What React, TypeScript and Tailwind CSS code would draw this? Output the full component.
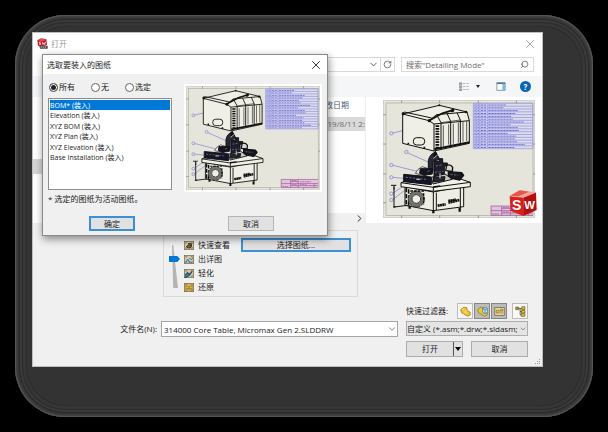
import { ReactNode, useState } from "react";
import { ChevronDown, ChevronRight, RotateCw, Search, X } from "lucide-react";

const sheets = ["BOM*", "Elevation", "XYZ BOM", "XYZ Plan", "XYZ Elevation", "Base Installation"];
const scopes = ["所有", "无", "选定"];
const modes = ["快速查看", "出详图", "轻化", "还原"];
const bomRows = [52, 46, 88, 82, 68, 74, 106, 66, 88, 92, 58, 84, 80, 86, 110, 78];

function SheetDrawing() {
  return (
    <svg viewBox="54 30 456 354" className="block w-full" aria-hidden="true">
      <rect x="54" y="30" width="456" height="354" fill="#e6e5db" />
      <rect x="55" y="31" width="454" height="352" fill="none" stroke="#c9c9c1" strokeWidth="2" />
      <rect x="63" y="39" width="441" height="337" fill="none" stroke="#a9a9a0" strokeWidth="2" />
      <path d="M110 31v8M224 31v8M340 31v8M454 31v8M110 376v8M224 376v8M340 376v8M454 376v8M55 74h8M55 162h8M55 252h8M55 338h8M504 74h6M504 162h6M504 252h6" stroke="#777" strokeWidth="2" />

      {/* bill of materials */}
      <rect x="325" y="40" width="178" height="136" fill="#dedeea" />
      {bomRows.map((w, i) => (
        <g key={i}>
          <path d={`M325 ${40 + i * 8.5}H503`} stroke="#8686e6" strokeWidth="2" />
          <path d={`M328 ${45 + i * 8.5}h4m5 0h5m5 0h18m5 0h${w}`} stroke="#6c6cd6" strokeWidth="3" strokeDasharray="7 2" />
        </g>
      ))}
      <path d="M325 176H503M325 40V176M334 40V176M344 40V176M367 40V176M503 40V176" stroke="#8d8de4" strokeWidth="2" fill="none" />

      {/* balloons and leaders */}
      <g stroke="#7474cc" strokeWidth="2" fill="none">
        <circle cx="79" cy="130" r="5" />
        <circle cx="124" cy="186" r="5" />
        <circle cx="79" cy="225" r="5" />
        <circle cx="79" cy="262" r="5" />
        <circle cx="79" cy="311" r="5" />
        <circle cx="79" cy="330" r="5" />
        <path d="M84 129 113 122M129 189 194 218M84 226 160 245M84 262 122 266M84 309 120 285M84 328 118 302" />
      </g>

      {/* enclosure */}
      <g stroke="#111" strokeWidth="3" strokeLinejoin="round">
        <path d="M113 72 223 46 306 66 313 92V160L207 183 113 160Z" fill="#f0efe5" />
        <path d="M113 72 192 92M192 92 215 74 306 66M192 92 207 102V183M118 66 200 84M215 74 228 98 228 177M246 70 257 94V170M276 68 286 90V165M207 102 313 92" fill="none" />
        <path d="M192 92 232 70 268 59" fill="none" strokeWidth="5" />
        <path d="M228 98 257 94M257 94 286 90M235 106V168M251 103V164M265 101V161M280 98V158M294 96V155M305 94V153" fill="none" strokeWidth="2" />
        <path d="M217 106V174" strokeWidth="11" strokeDasharray="5 3" />
        <path d="M208 178 313 157" strokeWidth="6" />
        <rect x="145" y="143" width="34" height="22" rx="10" fill="none" />
        <path d="M130 158v5M178 170v6" strokeWidth="5" />
      </g>
      <g fill="#111">
        <circle cx="115" cy="71" r="5" />
        <circle cx="223" cy="46" r="3" />
        <circle cx="193" cy="92" r="5" />
        <circle cx="303" cy="66" r="4" />
        <circle cx="262" cy="62" r="5" />
      </g>

      {/* base cabinet */}
      <g stroke="#111" strokeWidth="3" strokeLinejoin="round">
        <path d="M120 290 205 306 296 288V350L205 362 120 346Z" fill="#eeeee4" />
        <path d="M205 306V362M214 308V360M286 290V354" fill="none" />
        <path d="M108 278 143 266 278 264 316 277V290L205 304 108 290Z" fill="#f2f1e8" />
        <path d="M108 278 205 292 316 277M205 292v12" fill="none" />
        <path d="M124 294V345M131 298V348" strokeWidth="5" strokeDasharray="13 5" />
        <path d="M134 347v9M205 360v10M284 354v11" strokeWidth="7" />
        <circle cx="154" cy="327" r="19" fill="none" stroke="#73736e" strokeWidth="11" />
        <circle cx="154" cy="327" r="24" fill="none" stroke="#2c2c2c" strokeWidth="3" strokeDasharray="9 4" />
        <circle cx="154" cy="327" r="13" fill="none" stroke="#333" strokeWidth="3" />
        <path d="M218 347 242 343M250 338 284 330M250 333 273 329" strokeWidth="8" strokeDasharray="6 1" />
        <path d="M136 303h45M176 310v34" strokeWidth="4" strokeDasharray="8 3" />
      </g>

      {/* stage assembly */}
      <g stroke="#111" strokeLinejoin="round">
        <path d="M151 250Q157 236 172 230L190 236 182 258Z" fill="#e8e7dd" strokeWidth="2" />
        <path d="M212 186Q194 192 190 212V244H204V214L224 208Z" fill="#28283a" strokeWidth="3" />
        <path d="M211 184 206 199H218Z" fill="#111" strokeWidth="3" />
        <path d="M205 205 218 195M208 225 232 212" stroke="#bdbdb3" strokeWidth="3" />
        <path d="M207 214H223V206H233V219H247V228H238V270L207 273Z" fill="#1d1d2d" strokeWidth="3" />
        <path d="M116 253 199 261 199 284 116 275Z" fill="#151529" strokeWidth="3" />
        <path d="M166 236H202V252L178 256 164 250Z" fill="#161622" strokeWidth="3" />
        <path d="M245 226Q257 221 263 232L262 244 242 242Z" fill="#d8d7cf" strokeWidth="4" />
        <path d="M250 245 290 248 296 256 284 270 250 263Z" fill="#171721" strokeWidth="4" />
        <path d="M199 262 240 252 262 268 204 282Z" fill="#c9c8c0" strokeWidth="3" />
        <path d="M205 262 240 260 238 272 206 276Z" fill="#25252f" strokeWidth="3" />
        <path d="M122 262 184 268M212 228 230 225M210 247 236 244M256 253 280 256M187 244 196 242" stroke="#8b8b91" strokeWidth="2" strokeDasharray="7 4" />
        <path d="M154 268h12M225 250v15" stroke="#d9d9dd" strokeWidth="3" />
        <path d="M204 291 226 288" strokeWidth="4" />
      </g>
      <path d="M78 286H94M87 286V351L128 346M84 351H92M87 291v8" stroke="#111" strokeWidth="3" fill="none" />

      {/* title block */}
      <rect x="378" y="348" width="126" height="28" fill="#ddc6d8" />
      <path d="M378 348H504M378 376H504M378 348V376M410 348V376M436 348V376M378 362H504M410 369H504M410 355H436M490 362V376" stroke="#a0469a" strokeWidth="2" />
      <path d="M414 352h18M414 366h18M442 356h36M442 366h22M382 372h20" stroke="#b0609c" strokeWidth="3" strokeDasharray="6 2" />
    </svg>
  );
}

function CubeLogo() {
  return (
    <svg viewBox="0 0 84 80" className="absolute right-[5px] bottom-[6px] w-7" aria-hidden="true">
      <path d="M2 18 32 1 81 7 43 22Z" fill="#f3a29a" />
      <path d="M2 18 32 1 60 5 25 20Z" fill="#e8564b" />
      <path d="M2 18 43 22 43 78 5 62Z" fill="#d81f1a" />
      <path d="M43 22 81 7 83 60 43 78Z" fill="#b40f10" />
      <path d="M2 18 43 22 81 7" fill="none" stroke="#f6c0b8" strokeWidth="2" />
      <text x="9" y="60" fill="#fff" fontSize="42" fontWeight="700" fontFamily="Liberation Sans, sans-serif">S</text>
      <text x="46" y="56" fill="#fff" fontSize="34" fontWeight="700" fontFamily="Liberation Sans, sans-serif">W</text>
    </svg>
  );
}

function AppIcon() {
  return (
    <svg viewBox="0 0 33 33" className="size-[11px]" aria-hidden="true">
      <path d="M1 7 12 1 28 4 30 20 16 27 3 23Z" fill="#c4121f" />
      <path d="M3 7 12 2 27 5 17 10Z" fill="#e45a5c" />
      <path d="M12 12H7v4h4v4H6M16 12l2 8 3-6 2 6 3-9" stroke="#fff" strokeWidth="2" fill="none" />
      <path d="M7 23H32V32H9Z" fill="#4c4549" />
      <path d="M11 27h18" stroke="#ccc" strokeWidth="3" strokeDasharray="4 2" />
    </svg>
  );
}

function ModeIcon({ index }: { index: number }) {
  return (
    <svg viewBox="0 0 30 27" className="h-[9px] w-[10px]" aria-hidden="true">
      <rect x="1" y="1" width="28" height="25" fill={index === 3 ? "#d9b65c" : "#d8cba2"} stroke="#6d6348" strokeWidth="2" />
      <path d="M5 8V5h5M20 5h5v4M5 19v3h5M20 22h5v-4" fill="none" stroke="#75684a" strokeWidth="2" />
      {index === 0 && <path d="M7 17q8-11 16 0-8 9-16 0M12 8h10v7" fill="#8b7136" stroke="#2d2a22" strokeWidth="3" />}
      {index === 1 && <path d="M5 24 11 12 17 24M16 9l6 6 4-5M16 19l8 5" fill="#9dc0dc" stroke="#497899" strokeWidth="3" />}
      {index === 2 && <path d="M1 25Q14 25 24 7M3 19l8-8 5 7" fill="#3f719b" stroke="#24557c" strokeWidth="4" />}
      {index === 3 && <path d="M6 10h7v7H6zM17 10h7v7h-7zM10 18h10" fill="#f5d455" stroke="#8c6b1c" strokeWidth="2" />}
    </svg>
  );
}

function FilterIcon({ index }: { index: number }) {
  return (
    <svg viewBox="0 0 30 30" className="size-[11px]" aria-hidden="true">
      {index < 2 && <path d="M2 10 11 3 19 5V12L28 17V24L21 28 4 18Z" fill="#f0c52e" stroke="#94731b" strokeWidth="2" />}
      {index === 0 && <path d="M6 10 12 6M12 17l7 4M19 12l-6 3" stroke="#fff0a0" strokeWidth="2" />}
      {index === 1 && <path d="M15 7 22 3 29 7V17L22 21 15 17ZM15 7l7 4 7-4M22 11v10" fill="#c3e1ee" stroke="#397fa3" strokeWidth="2" />}
      {index === 2 && (
        <>
          <rect x="2" y="4" width="26" height="22" fill="#ddd4ad" stroke="#726642" strokeWidth="2" />
          <path d="M6 12h8v7H6zM18 9h6v5h-6zM17 19h8" fill="#f0c832" stroke="#92701a" strokeWidth="2" />
        </>
      )}
      {index === 3 && (
        <>
          <path d="M6 7h18M14 7v17h8M14 15h9" stroke="#333" strokeWidth="2" fill="none" />
          <path d="M2 3h8v7H2zM19 2h8v8h-8zM18 12h9v7h-9zM17 21h10v7H17z" fill="#efca31" stroke="#67571e" strokeWidth="2" />
          <path d="M3 4h6l-3 5z" fill="#468346" />
        </>
      )}
    </svg>
  );
}

function PushButton({ children, className }: { children: ReactNode; className: string }) {
  return (
    <button type="button" className={`flex items-center justify-center bg-[#e1e1e1] leading-none ${className}`}>
      {children}
    </button>
  );
}

function SheetDialog() {
  const [scope, setScope] = useState("所有");
  const [sheet, setSheet] = useState(["BOM*"]);

  return (
    <section role="dialog" aria-labelledby="sheet-title" className="absolute top-[21px] left-[9px] w-[286px] border border-[#8a8a8a] bg-[#f0f0f0] shadow-[1px_3px_8px_rgba(0,0,0,0.45)]">
      <header className="flex h-[19px] items-center justify-between bg-white px-1">
        <h2 id="sheet-title">选取要装入的图纸</h2>
        <button type="button" aria-label="关闭">
          <X className="size-[14px]" strokeWidth={1.5} />
        </button>
      </header>
      <div className="flex gap-3 px-[5px] pt-[7px]">
        <div className="w-[124px] shrink-0">
          <div className="flex h-3 items-center gap-4 pl-px">
            {scopes.map((name) => (
              <label key={name} className="flex items-center gap-px">
                <input
                  type="radio"
                  name="scope"
                  checked={scope === name}
                  onChange={() => setScope(name)}
                  className="size-[9px] appearance-none rounded-full border border-[#666] bg-white checked:bg-[#222] checked:shadow-[inset_0_0_0_1px_white]"
                />
                {name}
              </label>
            ))}
          </div>
          <select
            multiple
            aria-label="图纸"
            value={sheet}
            onChange={(e) => setSheet([e.target.value])}
            className="mt-[5px] block h-[92px] w-full appearance-none overflow-hidden border border-[#8a8d92] bg-white p-px text-[7px]"
          >
            {sheets.map((name) => (
              <option
                key={name}
                value={name}
                className="h-[10px] min-h-0 p-0 leading-[10px] even:h-[11px] checked:bg-[#0078d7] checked:bg-linear-to-r checked:from-[#0078d7] checked:to-[#0078d7] checked:text-white"
              >
                {name} (装入)
              </option>
            ))}
          </select>
        </div>
        <div className="mt-[3px] h-[108px] flex-1 bg-white p-[2px]">
          <SheetDrawing />
        </div>
      </div>
      <p className="pl-[5px] leading-[14px]">* 选定的图纸为活动图纸。</p>
      <footer className="flex justify-between pt-[10px] pr-[53px] pb-1 pl-[46px]">
        <PushButton className="h-[15px] w-[46px] border-2 border-[#3c8fd4]">确定</PushButton>
        <PushButton className="h-[15px] w-[46px] border border-[#b5b5b5]">取消</PushButton>
      </footer>
    </section>
  );
}

export default function App() {
  const [fileName, setFileName] = useState("314000 Core Table, Micromax Gen 2.SLDDRW");
  const [query, setQuery] = useState("");
  const [mode, setMode] = useState(1);

  return (
    <div className="min-h-screen bg-black p-[15px] font-['Open_Sans','Noto_Sans_CJK_SC',sans-serif] text-[8px] leading-none text-[#1a1a1a]">
      <div className="rounded-[50px] bg-[#333] pt-[17px] pr-[50px] pb-[50px] pl-[17px] shadow-[inset_0_0_0_1px_#535353,inset_0_0_0_2px_#414141,inset_0_0_0_4px_#373737,inset_0_0_0_5px_#292929,inset_0_0_0_7px_#3a3a3a,inset_0_0_0_8px_#2b2b2b,inset_0_0_0_11px_#363636,inset_0_0_0_12px_#2d2d2d]">
        <main className="relative border border-[#bdbdbd] bg-white">
          <header className="flex h-[21px] items-center gap-[3px] pr-[5px] pl-1 text-[#999]">
            <AppIcon />
            <h1 className="flex-1">打开</h1>
            <button type="button" aria-label="关闭窗口">
              <X className="size-[14px]" strokeWidth={1.5} />
            </button>
          </header>

          <div className="flex gap-[6px] pt-[3px] pr-2 pb-1 pl-20">
            <div className="flex h-[15px] flex-1 items-center justify-end border border-[#d9d9d9] text-[#555]">
              <button type="button" aria-label="以前的位置" className="flex h-full items-center border-r border-[#d9d9d9] pr-px">
                <ChevronDown className="size-[11px]" strokeWidth={2} />
              </button>
              <button type="button" aria-label="刷新" className="px-[2px]">
                <RotateCw className="size-[9px]" strokeWidth={2} />
              </button>
            </div>
            <label className="flex h-[15px] w-[133px] items-center border border-[#d9d9d9] px-1 text-[#555]">
              <input
                type="search"
                aria-label="搜索"
                value={query}
                onChange={(e) => setQuery(e.target.value)}
                placeholder={'搜索"Detailing Mode"'}
                className="min-w-0 flex-1 outline-none placeholder:text-[#6d6d6d]"
              />
              <Search className="size-[9px] -scale-x-100" strokeWidth={2} />
            </label>
          </div>

          <div className="flex h-[21px] items-center justify-end bg-[#f5f6f7] pr-[11px]">
            <button type="button" aria-label="更改视图" className="flex items-center gap-[7px]">
              <svg viewBox="0 0 30 26" className="h-[9px] w-[10px]" aria-hidden="true">
                <path d="M1 2h7v5H1zM1 11h7v5H1zM1 20h7v5H1z" fill="#aaa" stroke="#888" strokeWidth="2" />
                <path d="M12 4h7M22 4h7M12 13h7M22 13h7M12 22h7M22 22h7" stroke="#999" strokeWidth="2" />
              </svg>
              <span className="border-x-2 border-t-[3px] border-x-transparent border-t-[#222]" />
            </button>
            <button type="button" aria-label="预览窗格" className="ml-4">
              <svg viewBox="0 0 28 26" className="h-[9px] w-[10px]" aria-hidden="true">
                <path d="M2 2h24v22H2z" fill="#fff" stroke="#4e7691" strokeWidth="2" />
                <path d="M2 4h24" stroke="#4e7691" strokeWidth="4" />
                <path d="M18 5h8v19h-8z" fill="#80b9e2" />
              </svg>
            </button>
            <button type="button" aria-label="帮助" className="ml-[14px] size-[11px] rounded-full bg-[#0b63b5] text-center leading-[11px] font-bold text-white">
              ?
            </button>
          </div>

          <div className="flex h-[126px]">
            <nav className="w-24 pt-[62px]">
              <div className="h-[15px] bg-[#d5d5d5]" />
            </nav>
            <div className="flex min-w-0 flex-1 flex-col border-r border-[#eee]">
              <h2 className="h-[20px] pt-1 pr-4 text-right text-[#4c607a]">修改日期</h2>
              <p className="flex h-[14px] items-center justify-end bg-[#d9d9d9] text-[#6d6d6d]">2019/8/11 2:</p>
              <div className="mt-auto flex h-[10px] items-center justify-end bg-[#f0f0f0]">
                <ChevronRight className="size-[11px]" strokeWidth={2} />
              </div>
            </div>
            <div className="relative w-[176px] pt-[3px] pr-[7px] pl-[17px]">
              <SheetDrawing />
              <CubeLogo />
            </div>
          </div>

          <form className="flex gap-2 bg-[#f0f0f0] pr-[14px]" onSubmit={(e) => e.preventDefault()}>
            <div className="flex-1 pt-[7px]">
              <fieldset className="ml-[130px] flex h-[67px] w-[195px] gap-1 border border-[#d9d9d9] pt-[7px] pl-[5px]">
                <div className="relative h-12 w-[11px]">
                  <div className="absolute top-[7px] left-[3px] h-[43px] w-[6px] bg-[#b5b5b5] [clip-path:polygon(0_0,20%_0,100%_100%,20%_100%)]" />
                  <input
                    type="range"
                    aria-label="模式"
                    min={0}
                    max={3}
                    value={mode}
                    onChange={(e) => setMode(Number(e.target.value))}
                    className="absolute top-[5px] left-0 h-[45px] w-[11px] appearance-none bg-transparent [writing-mode:vertical-lr] [&::-webkit-slider-thumb]:h-[6px] [&::-webkit-slider-thumb]:w-[11px] [&::-webkit-slider-thumb]:appearance-none [&::-webkit-slider-thumb]:bg-[#0078d7] [&::-webkit-slider-thumb]:[clip-path:polygon(0_0,75%_0,100%_50%,75%_100%,0_100%)]"
                  />
                </div>
                <ul className="w-[53px]">
                  {modes.map((name, i) => (
                    <li key={name} className="flex h-[14px] items-center gap-1">
                      <ModeIcon index={i} />
                      {name}
                    </li>
                  ))}
                </ul>
                <PushButton className="h-[14px] w-[110px] border-2 border-[#3c8fd4]">选择图纸...</PushButton>
              </fieldset>
              <div className="mt-[24px] flex items-center gap-1">
                <label htmlFor="file-name" className="w-[124px] text-right">
                  文件名(N):
                </label>
                <div className="flex h-4 flex-1 items-center border border-[#a5a5a5] bg-white">
                  <input id="file-name" value={fileName} onChange={(e) => setFileName(e.target.value)} className="min-w-0 flex-1 pl-[2px] outline-none" />
                  <ChevronDown className="size-[10px] text-[#666]" strokeWidth={2} />
                </div>
              </div>
            </div>
            <div className="w-[122px] pt-20">
              <div className="flex items-center gap-px">
                <span className="flex-1 whitespace-nowrap">快速过滤器:</span>
                {["零件", "装配体", "工程图", "顶级装配体"].map((name, i) => (
                  <button
                    key={name}
                    type="button"
                    aria-label={name}
                    className={`flex size-4 items-center justify-center border ${i === 1 || i === 2 ? "border-[#858585] bg-[#bcbcbc]" : "border-[#bbb] bg-[#f8f8f8]"} ${i === 3 ? "ml-1" : ""}`}
                  >
                    <FilterIcon index={i} />
                  </button>
                ))}
              </div>
              <div className="mt-[2px] flex h-[15px] items-center border border-[#adadad] bg-[#e4e4e4]">
                <select aria-label="文件类型" className="min-w-0 flex-1 appearance-none overflow-hidden outline-none">
                  <option>自定义 (*.asm;*.drw;*.sldasm;</option>
                </select>
                <ChevronDown className="size-2 text-[#666]" strokeWidth={2} />
              </div>
              <div className="mt-[5px] mb-[9px] flex justify-between">
                <div className="flex h-4 w-[57px] border border-[#adadad]">
                  <PushButton className="flex-1 border-r border-[#555]">打开</PushButton>
                  <button type="button" aria-label="打开选项" className="flex w-2 items-center justify-center bg-[#e1e1e1]">
                    <span className="border-x-[3px] border-t-4 border-x-transparent border-t-black" />
                  </button>
                </div>
                <PushButton className="h-4 w-[57px] border border-[#adadad]">取消</PushButton>
              </div>
            </div>
            <svg viewBox="0 0 6 6" className="absolute right-px bottom-px size-[6px]" aria-hidden="true">
              <path d="M4 0h1v1H4zM2 2h1v1H2zM4 2h1v1H4zM0 4h1v1H0zM2 4h1v1H2zM4 4h1v1H4z" fill="#999" />
            </svg>
          </form>

          <SheetDialog />
        </main>
      </div>
    </div>
  );
}
